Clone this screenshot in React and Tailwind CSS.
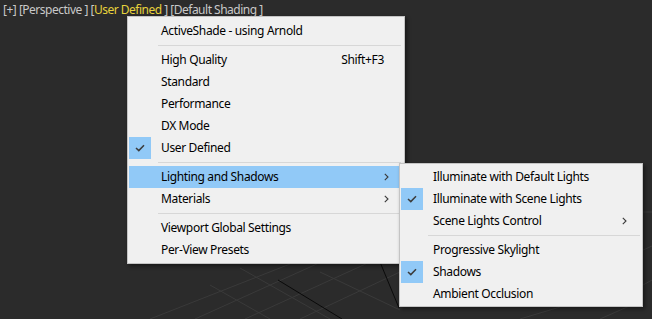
import React from "react";

const font = { fontFamily: '"Noto Sans", "Open Sans", sans-serif' };

function Check() {
  return (
    <div className="w-[22px] h-[22px] bg-[#91c9f7] flex items-center justify-center">
      <svg width="10" height="8" viewBox="0 0 10 8">
        <path d="M1 4 L3.8 6.6 L9 1.2" fill="none" stroke="#3c3c3c" strokeWidth="1.5" />
      </svg>
    </div>
  );
}

function Chevron() {
  return (
    <svg width="5" height="8" viewBox="0 0 5 8">
      <path d="M0.8 0.8 L4 4 L0.8 7.2" fill="none" stroke="#3a3a3a" strokeWidth="1.1" />
    </svg>
  );
}

function Row({ label, checked, hover, shortcut, sub }) {
  return (
    <div className={`h-[22px] flex items-center ${hover ? "bg-[#91c9f7]" : ""}`}>
      <div className="w-[32px] shrink-0 flex items-center">
        {checked ? <Check /> : null}
      </div>
      <div className="flex-1 text-[12px] tracking-[-0.35px] text-black leading-none whitespace-nowrap">{label}</div>
      {shortcut ? (
        <div className="text-[12px] tracking-[-0.35px] text-black leading-none pr-[19px]">{shortcut}</div>
      ) : null}
      {sub ? (
        <div className="w-[20px] flex justify-start pl-[1px]">
          <Chevron />
        </div>
      ) : null}
    </div>
  );
}

function Sep({ l = 29, r = 2 }) {
  return (
    <div className="h-[7px] flex items-center">
      <div className="h-px bg-[#d7d7d7] flex-1" style={{ marginLeft: l, marginRight: r }} />
    </div>
  );
}

export default function App() {
  return (
    <div className="relative w-[652px] h-[319px] bg-[#2b2b2b] overflow-hidden" style={font}>
      <svg className="absolute inset-0" width="652" height="319">
        <g stroke="#3a3a3a" strokeWidth="1">
          <line x1="195" y1="319" x2="330" y2="258" />
          <line x1="245" y1="319" x2="370" y2="262" />
          <line x1="300" y1="319" x2="400" y2="272" />
          <line x1="150" y1="319" x2="290" y2="264" />
          <line x1="210" y1="285" x2="270" y2="319" />
          <line x1="240" y1="268" x2="330" y2="319" />
          <line x1="320" y1="272" x2="400" y2="310" />
          <line x1="643" y1="212" x2="652" y2="212" />
          <line x1="643" y1="285" x2="652" y2="280" />
          <line x1="600" y1="319" x2="643" y2="300" />
          <line x1="520" y1="319" x2="560" y2="307" />
          <line x1="643" y1="250" x2="652" y2="246" />
        </g>
        <line x1="278" y1="280" x2="342" y2="319" stroke="#0a0a0a" strokeWidth="1" />
        <line x1="380" y1="262" x2="399" y2="308" stroke="#0a0a0a" strokeWidth="1" />
      </svg>

      <div className="relative pl-[3px] pt-[3px] text-[12px] tracking-[-0.5px] leading-[14px] text-[#c9c9c9] whitespace-pre">
        [+] [Perspective ] [<span className="text-[#e8d33c]">User Defined</span> ] [Default Shading ]
      </div>

      <div className="absolute left-[127px] top-[16px] w-[278px] bg-[#f0f0f0] border border-[#c4c4c4] pt-[3px] pb-[2px] pl-[1px] pr-[1px] shadow-[2px_2px_4px_rgba(0,0,0,0.45)]">
        <Row label="ActiveShade - using Arnold" />
        <Sep l={29} r={2} />
        <Row label="High Quality" shortcut="Shift+F3" />
        <Row label="Standard" />
        <Row label="Performance" />
        <Row label="DX Mode" />
        <Row label="User Defined" checked />
        <Sep l={29} r={2} />
        <Row label="Lighting and Shadows" hover sub />
        <Row label="Materials" sub />
        <Sep l={29} r={2} />
        <Row label="Viewport Global Settings" />
        <Row label="Per-View Presets" />
      </div>

      <div className="absolute left-[399px] top-[163px] w-[244px] bg-[#f0f0f0] border border-[#c4c4c4] pt-[2px] pb-[1px] pl-[1px] pr-[1px] shadow-[2px_2px_4px_rgba(0,0,0,0.45)]">
        <Row label="Illuminate with Default Lights" />
        <Row label="Illuminate with Scene Lights" checked />
        <Row label="Scene Lights Control" sub />
        <Sep l={27} r={1} />
        <Row label="Progressive Skylight" />
        <Row label="Shadows" checked />
        <Row label="Ambient Occlusion" />
      </div>
    </div>
  );
}
